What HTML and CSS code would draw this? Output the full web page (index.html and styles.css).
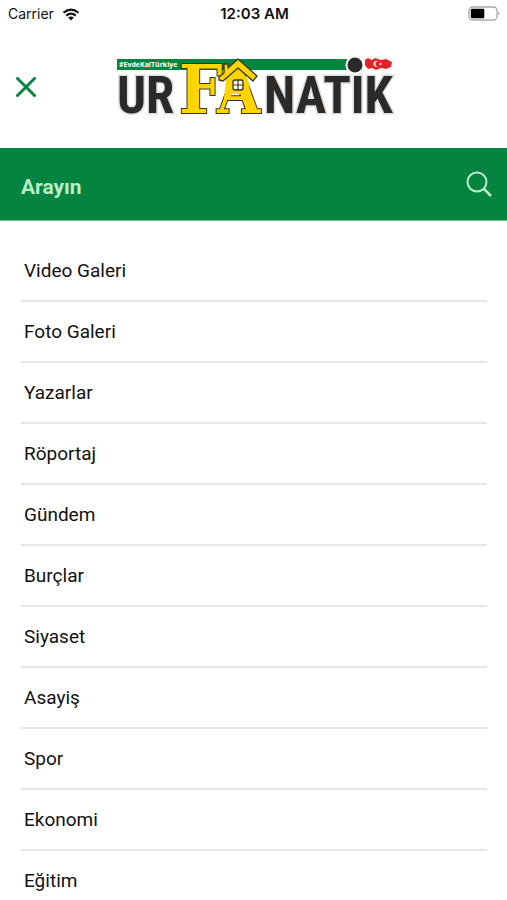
FILE: index.html
```html
<!DOCTYPE html>
<html lang="tr">
<head>
<meta charset="utf-8">
<meta name="viewport" content="width=device-width, initial-scale=1">
<title>Urfanatik</title>
<link rel="stylesheet" href="styles.css">
</head>
<body>
<div class="status">
  <div class="status-left">
    <span>Carrier</span>
    <svg class="wifi" viewBox="0 0 18 13" aria-hidden="true">
      <path d="M1.5 4.8Q9-1.6 16.5 4.8M4.2 7.6Q9 3.6 13.8 7.6" fill="none" stroke="#111" stroke-width="2.1"/>
      <path d="M6.1 9.6Q9 7.4 11.9 9.6L9 12.6Z" fill="#111"/>
    </svg>
  </div>
  <span class="clock">12:03 AM</span>
  <div class="status-right">
    <svg class="battery" viewBox="0 0 33 16" aria-hidden="true">
      <rect x="1" y="1" width="28" height="13" rx="3.5" fill="#fff" stroke="#aaa" stroke-width="1.3"/>
      <rect x="2.8" y="2.8" width="13.5" height="9.4" rx="1" fill="#000"/>
      <path d="M30.3 5.5Q33 7.5 30.3 9.5Z" fill="#aaa"/>
    </svg>
  </div>
</div>
<header class="header">
  <button class="close" type="button" aria-label="Kapat">
    <svg viewBox="0 0 20 20" aria-hidden="true"><path d="M1.5 1.5 18.5 18.5M18.5 1.5 1.5 18.5" stroke="#058640" stroke-width="3" stroke-linecap="round"/></svg>
  </button>
  <a class="logo" href="#" aria-label="Urfanatik">
    <svg viewBox="0 0 280 62" aria-hidden="true">
      <rect x="3" y="3" width="230" height="11" fill="#058640"/>
      <text class="tag" x="5" y="11">#EvdeKalTürkiye</text>
      <text class="word" x="3" y="57">UR</text>
      <text class="word" x="150" y="57">NATİK</text>
      <circle cx="241" cy="9" r="8.5" fill="#2b2a29" stroke="#fff" stroke-width="2"/>
      <text class="gold gold-f" x="65" y="57">F</text>
      <text class="gold gold-a" x="103" y="57">A</text>
      <path d="M112 23 123 12 134 23 137 42H133L131 38H118L116 42H110Z" fill="#ffd500"/>
      <path d="M105 24V21L110 17V8H114V12L124 3 143 20 139 25 124 12 109 25Z" fill="#ffd500" stroke="#3b3515" stroke-width="1.3" stroke-linejoin="round"/>
      <rect x="119" y="24" width="10" height="10" rx="2" fill="#fff" stroke="#3b3515" stroke-width="1.3"/>
      <path d="M124 24V34M119 29H129" stroke="#3b3515" stroke-width="1.2"/>
      <path d="M251 4 254 2 258 4 261 2 267 4 272 3 278 6 277 11 272 13 267 12 262 14 258 12 254 13 251 9Z" fill="#e32229"/>
      <path d="M264 5.3A3 3 0 1 0 264 10.5A2.3 2.3 0 1 1 264 5.3Z" fill="#fff"/>
      <circle cx="266.5" cy="8" r="1" fill="#fff"/>
    </svg>
  </a>
</header>
<form class="search" role="search">
  <input type="text" placeholder="Arayın" aria-label="Arayın">
  <button type="submit" aria-label="Ara">
    <svg viewBox="0 0 26 26" fill="none" stroke="#b9edc8" stroke-width="2" aria-hidden="true"><circle cx="11" cy="11" r="9.5"/><path d="M17.5 17.5 25 25" stroke-width="2.5"/></svg>
  </button>
</form>
<nav class="menu">
  <a href="#">Video Galeri</a>
  <a href="#">Foto Galeri</a>
  <a href="#">Yazarlar</a>
  <a href="#">Röportaj</a>
  <a href="#">Gündem</a>
  <a href="#">Burçlar</a>
  <a href="#">Siyaset</a>
  <a href="#">Asayiş</a>
  <a href="#">Spor</a>
  <a href="#">Ekonomi</a>
  <a href="#">Eğitim</a>
</nav>
</body>
</html>
```
FILE: styles.css
```css
* { box-sizing: border-box; }
body {
  margin: 0;
  background: #fff;
  color: #111;
  font-family: Roboto, "Liberation Sans", sans-serif;
}
button { border: 0; padding: 0; background: none; cursor: pointer; }
svg { display: block; }
.status {
  display: grid;
  grid-template-columns: 1fr auto 1fr;
  align-items: center;
  height: 28px;
  padding: 0 6px 0 8px;
  font: 14px/28px Inter, sans-serif;
}
.status-left { display: flex; align-items: center; gap: 8px; }
.wifi { width: 18px; height: 13px; }
.clock { font-size: 15px; font-weight: 600; }
.status-right { display: flex; justify-content: flex-end; }
.battery { width: 33px; height: 16px; }
.header {
  display: grid;
  grid-template-columns: 20px 1fr 20px;
  align-items: center;
  height: 120px;
  padding: 0 16px 2px;
}
.close { width: 20px; height: 20px; }
.close svg { width: 20px; height: 20px; }
.logo { justify-self: center; }
.logo svg { width: 280px; height: 62px; overflow: visible; }
.tag { font: bold 7px "Open Sans", sans-serif; fill: #fff; }
.word {
  font: bold 51px "Roboto Condensed", "Liberation Sans Narrow", sans-serif;
  fill: #2b2a29;
  stroke: #ddd;
  stroke-width: 3px;
  paint-order: stroke;
}
.gold {
  fill: #ffd500;
  stroke: #3b3515;
  stroke-width: 2px;
  paint-order: stroke;
}
.gold-f { font: bold 68px "DejaVu Serif Condensed", "Liberation Serif", serif; }
.gold-a { font: bold 62px "DejaVu Serif Condensed", "Liberation Serif", serif; }
.search {
  display: flex;
  align-items: center;
  height: 73px;
  padding: 0 15px 0 21px;
  background: #058340;
  border-bottom: 1px solid #6fbf8e;
}
.search input {
  flex: 1;
  min-width: 0;
  padding: 5px 0 0;
  border: 0;
  outline: 0;
  background: transparent;
  color: #fff;
  font: bold 21px/28px Roboto, sans-serif;
}
.search input::placeholder { color: #b9edc8; opacity: 1; }
.search svg { width: 26px; height: 26px; }
.menu { padding: 20px 20px 0 21px; }
.menu a {
  display: block;
  height: 61px;
  padding: 0 3px;
  border-bottom: 2px solid #e6e6e6;
  color: #111;
  font-size: 19px;
  line-height: 60px;
  text-decoration: none;
}
.menu a:last-child { border-bottom: 0; }
```
